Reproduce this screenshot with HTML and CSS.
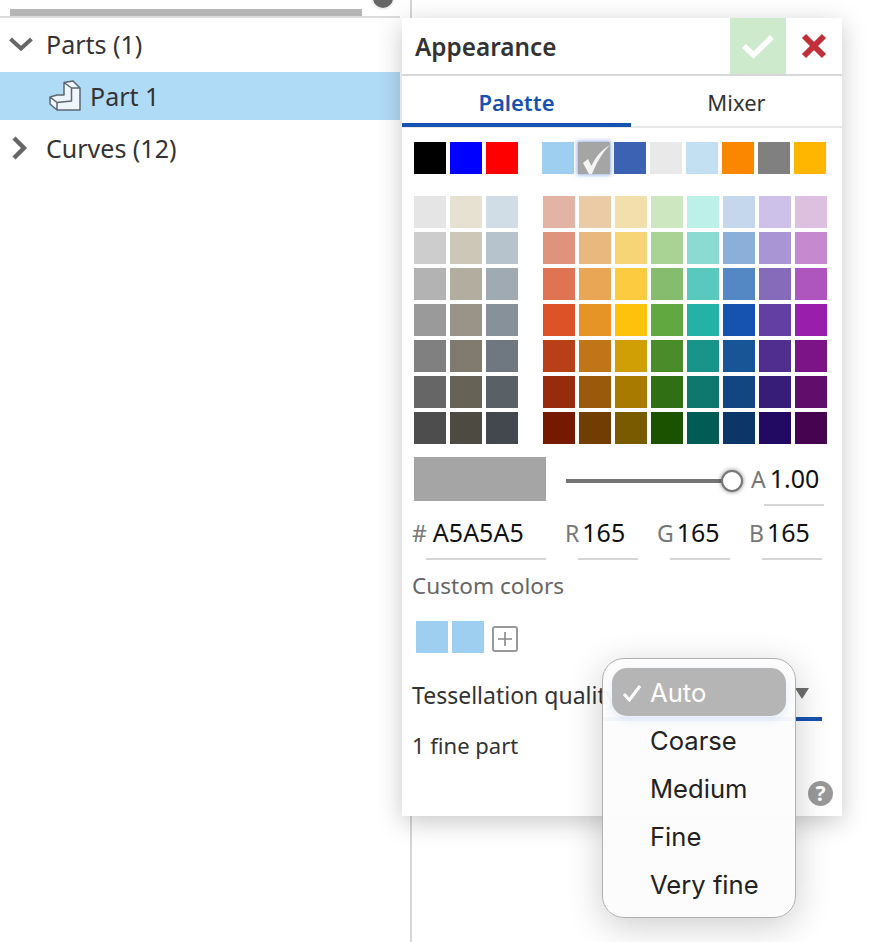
FILE: index.html
```html
<!DOCTYPE html>
<html lang="en">
<head>
<meta charset="utf-8">
<title>Appearance</title>
<link rel="stylesheet" href="styles.css">
</head>
<body>
<div class="page">
  <aside class="tree">
    <div class="tree-top"><div class="scrollbar"></div></div>
    <div class="knob"></div>
    <div class="row row-parts">
      <svg class="chev" width="26" height="16" viewBox="0 0 26 16"><path d="M2.5 3 L13 12.5 L23.5 3" fill="none" stroke="#666" stroke-width="4"/></svg>
      <span>Parts (1)</span>
    </div>
    <div class="row row-part">
      <svg class="part-icon" width="32" height="32" viewBox="0 0 32 32">
        <path d="M1 17 L1 24 L8 30 L31 30 L31 8 L24 1 L15 2.5 L15 15 L8 15 Z" fill="#eef5fc"/>
        <path d="M1 17 L8 15 L15 15 L15 2.5 L24 1 L31 8 L31 30 L8 30 L1 24 Z M1 17 L8 22.5 L22.5 21 L22.5 8 L15 2.5 M22.5 8 L31 8 M8 22.5 L8 30" fill="none" stroke="#5b6770" stroke-width="1.5" stroke-linejoin="round"/>
      </svg>
      <span>Part 1</span>
    </div>
    <div class="row row-curves">
      <svg class="chev" width="26" height="24" viewBox="0 0 26 24"><path d="M6 2 L16 12 L6 22" fill="none" stroke="#666" stroke-width="4.4"/></svg>
      <span>Curves (12)</span>
    </div>
  </aside>
  <div class="divider"></div>

  <section class="dialog">
    <header class="dlg-head">
      <h1>Appearance</h1>
      <button class="ok"><svg width="34" height="26" viewBox="0 0 34 26"><path d="M3 13 L12.5 22 L31 4" fill="none" stroke="#fff" stroke-width="5.5"/></svg></button>
      <button class="cancel"><svg width="26" height="26" viewBox="0 0 26 26"><path d="M3 3 L23 23 M23 3 L3 23" fill="none" stroke="#c1303a" stroke-width="6"/></svg></button>
    </header>
    <nav class="tabs">
      <div class="tab active">Palette</div>
      <div class="tab">Mixer</div>
    </nav>

    <div class="recent">
      <div class="sw-row">
        <i class="sw c-000000"></i><i class="sw c-0000ff"></i><i class="sw c-ff0000"></i>
      </div>
      <div class="sw-row">
        <i class="sw c-9ecff0"></i>
        <i class="sw c-a5a5a5 current"><svg width="32" height="32" viewBox="0 0 32 32"><path d="M5 21 L10 17 L13.5 24 C17 16 22 9 32 3 C24 11 18.5 21 14 32 L11 32 Z" fill="#f4f4f4"/></svg></i>
        <i class="sw c-3b62b3"></i><i class="sw c-e9e9e9"></i><i class="sw c-c3e0f3"></i><i class="sw c-fb8700"></i><i class="sw c-808080"></i><i class="sw c-ffb600"></i>
      </div>
    </div>

    <div class="palette">
      <div class="grid grid-gray">
        <i class="sw c-e5e5e5"></i><i class="sw c-e6e1d1"></i><i class="sw c-d0dce6"></i>
        <i class="sw c-cdcdcd"></i><i class="sw c-cdc7b8"></i><i class="sw c-b6c2cc"></i>
        <i class="sw c-b3b3b3"></i><i class="sw c-b3ad9f"></i><i class="sw c-a0aab3"></i>
        <i class="sw c-9a9a9a"></i><i class="sw c-9a9387"></i><i class="sw c-87919a"></i>
        <i class="sw c-808080"></i><i class="sw c-807b6e"></i><i class="sw c-6f7880"></i>
        <i class="sw c-666666"></i><i class="sw c-666356"></i><i class="sw c-596066"></i>
        <i class="sw c-4d4d4d"></i><i class="sw c-4d4a42"></i><i class="sw c-42484d"></i>
      </div>
      <div class="grid grid-hue">
        <i class="sw c-e3b3a6"></i><i class="sw c-ebcba6"></i><i class="sw c-f2dfac"></i><i class="sw c-cde8c0"></i><i class="sw c-bdf0e9"></i><i class="sw c-c4d7ed"></i><i class="sw c-cdc1ea"></i><i class="sw c-dcc0de"></i>
        <i class="sw c-e0937c"></i><i class="sw c-e9b87f"></i><i class="sw c-f6d577"></i><i class="sw c-a9d295"></i><i class="sw c-8cdbd3"></i><i class="sw c-8cafd9"></i><i class="sw c-a995d3"></i><i class="sw c-c489cf"></i>
        <i class="sw c-e07352"></i><i class="sw c-e9a655"></i><i class="sw c-fccb40"></i><i class="sw c-85bc6d"></i><i class="sw c-59c8be"></i><i class="sw c-5388c4"></i><i class="sw c-866bba"></i><i class="sw c-ae56bd"></i>
        <i class="sw c-de5227"></i><i class="sw c-e79427"></i><i class="sw c-ffc20c"></i><i class="sw c-62a840"></i><i class="sw c-25b2a6"></i><i class="sw c-1653b0"></i><i class="sw c-633fa3"></i><i class="sw c-981eab"></i>
        <i class="sw c-b83f18"></i><i class="sw c-c07518"></i><i class="sw c-d09e05"></i><i class="sw c-4a8b2a"></i><i class="sw c-19948a"></i><i class="sw c-185596"></i><i class="sw c-4f2e8f"></i><i class="sw c-7c1488"></i>
        <i class="sw c-972c0c"></i><i class="sw c-9a5a0b"></i><i class="sw c-a87b00"></i><i class="sw c-316f14"></i><i class="sw c-0e786f"></i><i class="sw c-114680"></i><i class="sw c-371c78"></i><i class="sw c-600d6b"></i>
        <i class="sw c-751a00"></i><i class="sw c-723d00"></i><i class="sw c-7a5a00"></i><i class="sw c-1a5200"></i><i class="sw c-005c54"></i><i class="sw c-0b3667"></i><i class="sw c-220961"></i><i class="sw c-450350"></i>
      </div>
    </div>

    <div class="alpha-row">
      <div class="preview"></div>
      <div class="slider"><div class="thumb"></div></div>
      <div class="field field-a"><label>A</label><span class="val">1.00</span></div>
    </div>

    <div class="rgb-row">
      <div class="field field-hex"><label>#</label><span class="val">A5A5A5</span></div>
      <div class="field field-c"><label>R</label><span class="val">165</span></div>
      <div class="field field-c"><label>G</label><span class="val">165</span></div>
      <div class="field field-c"><label>B</label><span class="val">165</span></div>
    </div>

    <div class="custom-label">Custom colors</div>
    <div class="custom-row">
      <i class="sw c-9ecff0"></i><i class="sw c-9ecff0"></i>
      <div class="plus"><svg width="14" height="14" viewBox="0 0 14 14"><path d="M7 0 V14 M0 7 H14" stroke="#888" stroke-width="1.6"/></svg></div>
    </div>

    <div class="tess-row">
      <span>Tessellation quality</span>
      <div class="tess-select"><svg width="16" height="12" viewBox="0 0 16 12"><path d="M1 1 H15 L8 12 Z" fill="#6e6e6e"/></svg></div>
    </div>
    <div class="fine">1 fine part</div>
    <div class="help-row"><div class="help">?</div></div>

    <div class="menu">
      <div class="menu-item selected"><svg class="tick" width="20" height="18" viewBox="0 0 20 18"><path d="M2 10 L7.5 16 L18 2" fill="none" stroke="#fff" stroke-width="3"/></svg>Auto</div>
      <div class="menu-item">Coarse</div>
      <div class="menu-item">Medium</div>
      <div class="menu-item">Fine</div>
      <div class="menu-item">Very fine</div>
    </div>
  </section>
</div>
</body>
</html>
```

FILE: styles.css
```css
* { box-sizing: border-box; }
html, body { margin: 0; height: 100%; background: #fff; }
body { font-family: "Noto Sans", sans-serif; color: #333; overflow: hidden; }
.page { position: relative; width: 882px; height: 942px; display: flex; }

/* left tree */
.tree { position: relative; width: 410px; padding-right: 10px; font-size: 25px; }
.tree-top { height: 18px; padding: 9px 38px 0 10px; border-bottom: 2px solid #dcdcdc; }
.scrollbar { height: 7px; background: #b5b5b5; }
.knob { position: absolute; left: 373px; top: -12px; width: 20px; height: 20px; border-radius: 50%; background: #666; box-shadow: 0 0 0 2px #f0f0f0; }
.row { display: flex; align-items: center; }
.row-parts { height: 54px; padding: 0 0 3px 8px; }
.row-part { height: 48px; padding-left: 49px; background: #b0dbf6; }
.row-curves { height: 58px; padding: 0 0 2px 8px; }
.chev { margin-right: 12px; }
.part-icon { margin-right: 9px; }
.divider { width: 2px; height: 100%; background: #d6d6d6; }

/* dialog */
.dialog { position: absolute; left: 402px; top: 18px; width: 440px; height: 798px; background: #fff; box-shadow: 0 6px 24px rgba(0,0,0,.22); }
.dlg-head { display: flex; align-items: stretch; height: 58px; border-bottom: 2px solid #d8d8d8; }
.dlg-head h1 { flex: 1; margin: 0; padding: 0 0 0 13px; font-size: 24.3px; font-weight: 600; line-height: 58px; color: #333; }
.dlg-head button { border: 0; padding: 0; width: 56px; display: flex; align-items: center; justify-content: center; background: none; }
.dlg-head .ok { background: #cdeacd; }
.tabs { display: flex; height: 52px; border-bottom: 2px solid #e8e8e8; }
.tab { width: 211px; text-align: center; font-size: 22px; line-height: 52px; color: #333; }
.tab.active { width: 229px; color: #1653b0; font-weight: 600; height: 51px; border-bottom: 4px solid #1653b0; }

.sw { display: block; width: 32px; height: 32px; flex: none; }
.recent { display: flex; gap: 24px; padding: 14px 0 0 12px; }
.sw-row { display: flex; gap: 4px; }
.current { box-shadow: 0 0 4px 1px rgba(70,110,210,.55); }
.current svg { display: block; }

.palette { display: flex; gap: 25px; padding: 22px 0 0 12px; }
.grid { display: grid; gap: 4px; grid-auto-rows: 32px; }
.grid-gray { grid-template-columns: repeat(3, 32px); }
.grid-hue { grid-template-columns: repeat(8, 32px); }

.alpha-row { display: flex; align-items: center; height: 50px; margin-top: 13px; padding-left: 12px; position: relative; }
.preview { width: 132px; height: 44px; background: #a5a5a5; margin-top: -6px; }
.slider { position: relative; width: 167px; height: 4px; margin: -2px 0 0 20px; background: #757575; }
.thumb { position: absolute; right: -10px; top: -9px; width: 22px; height: 22px; border-radius: 50%; background: #fff; border: 2px solid #777; box-shadow: 0 0 4px rgba(0,0,0,.5); }
.field { display: flex; align-items: baseline; font-size: 25px; position: relative; }
.field label { color: #777; font-size: 23px; }
.val { color: #111; }
.field::after { content: ""; position: absolute; bottom: 0; height: 2px; background: #d6d6d6; }
.field-a { margin: 0 0 0 18px; height: 48px; line-height: 40px; width: 76px; }
.field-a .val { margin-left: 4px; }
.field-a::after { left: 13px; width: 60px; }

.rgb-row { display: flex; height: 53px; padding-left: 10px; line-height: 50px; }
.field-hex { width: 153px; }
.field-hex .val { margin-left: 6px; }
.field-hex::after { left: 14px; width: 120px; }
.field-c { width: 92px; }
.field-c .val { margin-left: 3px; }
.field-c::after { left: 13px; width: 60px; }

.custom-label { padding-left: 10px; margin-top: 10px; font-size: 22.6px; line-height: 32px; color: #666; }
.custom-row { display: flex; align-items: center; gap: 4px; margin-top: 19px; padding-left: 14px; }
.plus { width: 26px; height: 26px; margin: 4px 0 0 4px; border: 2px solid #999; border-radius: 3px; display: flex; align-items: center; justify-content: center; }

.tess-row { display: flex; align-items: center; margin-top: 17px; padding: 1px 0 0 10px; height: 48px; font-size: 23px; position: relative; white-space: nowrap; }
.tess-select { position: absolute; left: 200px; width: 220px; top: 0; height: 51px; border-bottom: 4px solid #1653b0; display: flex; justify-content: flex-end; padding: 17px 12px 0 0; }
.fine { padding-left: 10px; margin-top: 11px; font-size: 22px; line-height: 32px; }
.help-row { display: flex; justify-content: flex-end; padding: 20px 9px 0 0; }
.help { width: 25px; height: 25px; border-radius: 50%; background: #999; color: #fff; font: 700 21px/25px "Noto Sans", sans-serif; text-align: center; }

/* dropdown */
.menu { position: absolute; left: 200px; top: 640px; width: 194px; height: 260px; padding: 9px; border-radius: 22px; background: rgba(252,252,252,.97); border: 1px solid #b0b0b0; box-shadow: 0 8px 36px rgba(0,0,0,.2); font-family: Inter, sans-serif; font-size: 25.6px; color: #222; }
.menu-item { position: relative; height: 48px; line-height: 50px; padding-left: 38px; white-space: nowrap; }
.menu-item.selected { background: #b5b5b5; border-radius: 15px; color: #fff; box-shadow: 0 4px 8px rgba(90,140,230,.14); }
.tick { position: absolute; left: 10px; top: 16px; }

/* swatch colours */
.c-000000{background:#000000}.c-0000ff{background:#0000ff}.c-ff0000{background:#ff0000}
.c-9ecff0{background:#9ecff0}.c-a5a5a5{background:#a5a5a5}.c-3b62b3{background:#3b62b3}.c-e9e9e9{background:#e9e9e9}.c-c3e0f3{background:#c3e0f3}.c-fb8700{background:#fb8700}.c-808080{background:#808080}.c-ffb600{background:#ffb600}
.c-e5e5e5{background:#e5e5e5}.c-e6e1d1{background:#e6e1d1}.c-d0dce6{background:#d0dce6}
.c-cdcdcd{background:#cdcdcd}.c-cdc7b8{background:#cdc7b8}.c-b6c2cc{background:#b6c2cc}
.c-b3b3b3{background:#b3b3b3}.c-b3ad9f{background:#b3ad9f}.c-a0aab3{background:#a0aab3}
.c-9a9a9a{background:#9a9a9a}.c-9a9387{background:#9a9387}.c-87919a{background:#87919a}
.c-807b6e{background:#807b6e}.c-6f7880{background:#6f7880}
.c-666666{background:#666666}.c-666356{background:#666356}.c-596066{background:#596066}
.c-4d4d4d{background:#4d4d4d}.c-4d4a42{background:#4d4a42}.c-42484d{background:#42484d}
.c-e3b3a6{background:#e3b3a6}.c-ebcba6{background:#ebcba6}.c-f2dfac{background:#f2dfac}.c-cde8c0{background:#cde8c0}.c-bdf0e9{background:#bdf0e9}.c-c4d7ed{background:#c4d7ed}.c-cdc1ea{background:#cdc1ea}.c-dcc0de{background:#dcc0de}
.c-e0937c{background:#e0937c}.c-e9b87f{background:#e9b87f}.c-f6d577{background:#f6d577}.c-a9d295{background:#a9d295}.c-8cdbd3{background:#8cdbd3}.c-8cafd9{background:#8cafd9}.c-a995d3{background:#a995d3}.c-c489cf{background:#c489cf}
.c-e07352{background:#e07352}.c-e9a655{background:#e9a655}.c-fccb40{background:#fccb40}.c-85bc6d{background:#85bc6d}.c-59c8be{background:#59c8be}.c-5388c4{background:#5388c4}.c-866bba{background:#866bba}.c-ae56bd{background:#ae56bd}
.c-de5227{background:#de5227}.c-e79427{background:#e79427}.c-ffc20c{background:#ffc20c}.c-62a840{background:#62a840}.c-25b2a6{background:#25b2a6}.c-1653b0{background:#1653b0}.c-633fa3{background:#633fa3}.c-981eab{background:#981eab}
.c-b83f18{background:#b83f18}.c-c07518{background:#c07518}.c-d09e05{background:#d09e05}.c-4a8b2a{background:#4a8b2a}.c-19948a{background:#19948a}.c-185596{background:#185596}.c-4f2e8f{background:#4f2e8f}.c-7c1488{background:#7c1488}
.c-972c0c{background:#972c0c}.c-9a5a0b{background:#9a5a0b}.c-a87b00{background:#a87b00}.c-316f14{background:#316f14}.c-0e786f{background:#0e786f}.c-114680{background:#114680}.c-371c78{background:#371c78}.c-600d6b{background:#600d6b}
.c-751a00{background:#751a00}.c-723d00{background:#723d00}.c-7a5a00{background:#7a5a00}.c-1a5200{background:#1a5200}.c-005c54{background:#005c54}.c-0b3667{background:#0b3667}.c-220961{background:#220961}.c-450350{background:#450350}
```
